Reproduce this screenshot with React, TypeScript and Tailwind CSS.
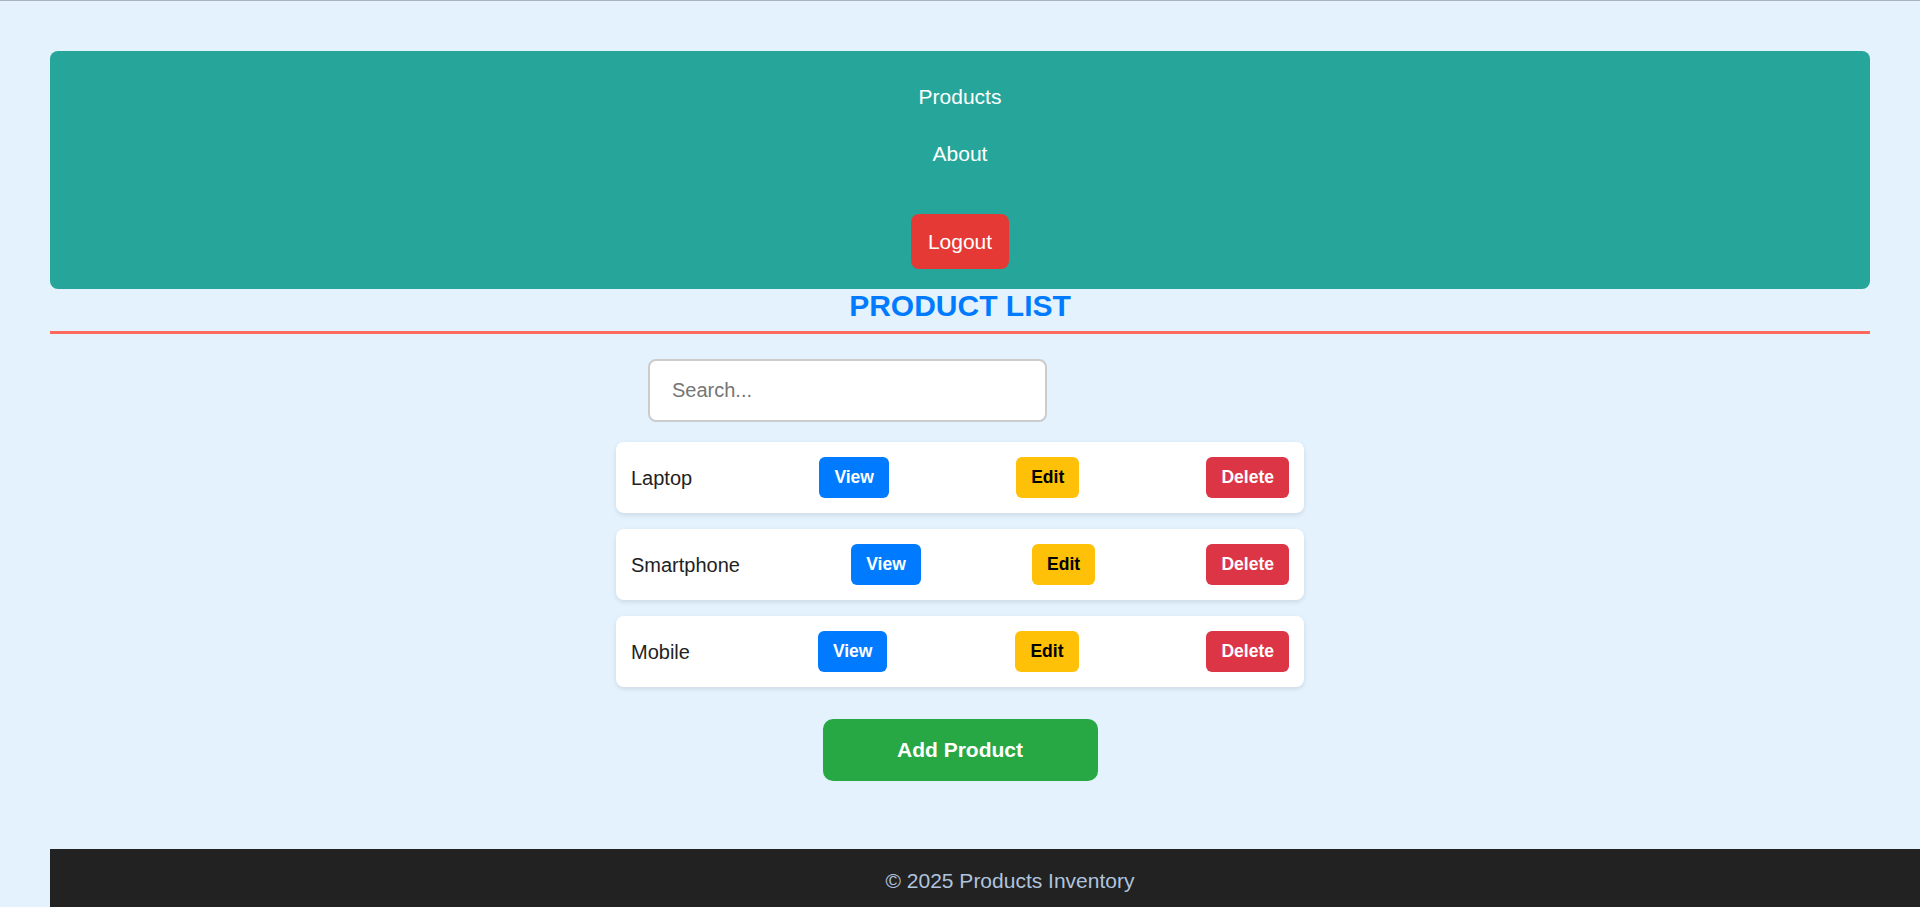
import React from "react";

const products = ["Laptop", "Smartphone", "Mobile"];

export default function App() {
  return (
    <div className="h-screen overflow-hidden border-t border-[#a9b3bd] bg-[#e3f2fd] font-['Liberation_Sans',Arial,sans-serif]">
      <div className="px-[50px] pt-[50px]">
        <nav className="flex flex-col items-center rounded-lg bg-[#26a69a] pb-[20px] pt-[34px] text-white">
          <a href="#products" className="text-[21px] leading-[24px]">Products</a>
          <a href="#about" className="mt-[33px] text-[21px] leading-[24px]">About</a>
          <button className="mt-[48px] rounded-lg bg-[#e53935] px-[17px] py-[15px] text-[21px] leading-[25px] text-white">
            Logout
          </button>
        </nav>

        <h2 className="border-b-[3px] border-[#ff6a5c] pb-[8px] text-center text-[30px] font-bold leading-[34px] text-[#007bff]">
          PRODUCT LIST
        </h2>
      </div>

      <div className="mx-auto flex w-[688px] flex-col">
        <input
          type="text"
          placeholder="Search..."
          className="ml-[32px] mt-[25px] h-[63px] w-[399px] rounded-lg border-2 border-[#cccccc] bg-white px-[22px] text-[20px] text-[#222] outline-none placeholder:text-[#757575]"
        />

        <ul className="mt-[20px] flex flex-col gap-[16px]">
          {products.map((name) => (
            <li
              key={name}
              className="flex items-center justify-between rounded-lg bg-white px-[15px] py-[15px] shadow-[0_2px_5px_rgba(0,0,0,0.1)]"
            >
              <span className="text-[20px] text-[#222]">{name}</span>
              <button className="rounded-md bg-[#007bff] px-[15px] py-[10px] text-[17.5px] font-bold leading-[21px] text-white">View</button>
              <button className="rounded-md bg-[#ffc107] px-[15px] py-[10px] text-[17.5px] font-bold leading-[21px] text-black">Edit</button>
              <button className="rounded-md bg-[#dc3545] px-[15px] py-[10px] text-[17.5px] font-bold leading-[21px] text-white">Delete</button>
            </li>
          ))}
        </ul>

        <button className="mx-auto mt-[32px] h-[62px] w-[275px] rounded-[10px] bg-[#28a745] text-[21px] font-bold text-white">
          Add Product
        </button>
      </div>

      <footer className="ml-[50px] mt-[68px] w-full bg-[#222222] py-[20px] text-center text-[21px] leading-[24px] text-[#b0c4de]">
        © 2025 Products Inventory
      </footer>
    </div>
  );
}
